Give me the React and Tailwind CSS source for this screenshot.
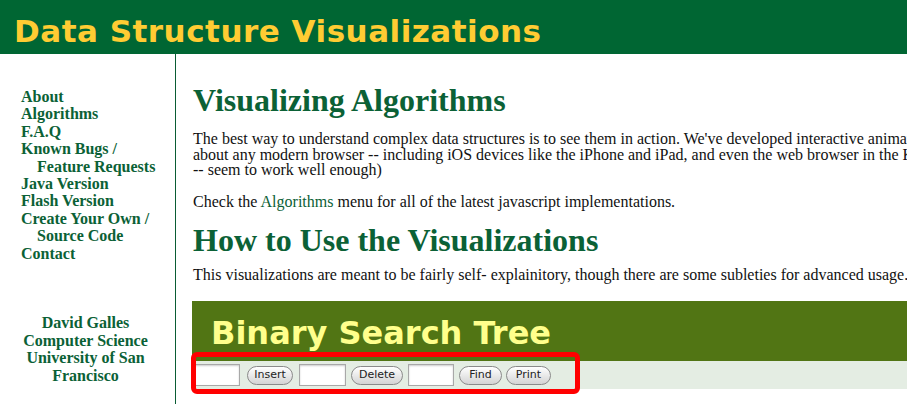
export default function App() {
  const links = [
    { label: "About" },
    { label: "Algorithms" },
    { label: "F.A.Q" },
    { label: "Known Bugs /" },
    { label: "Feature Requests", indent: true },
    { label: "Java Version" },
    { label: "Flash Version" },
    { label: "Create Your Own /" },
    { label: "Source Code", indent: true },
    { label: "Contact" },
  ];

  return (
    <div className="h-screen overflow-hidden bg-white flex flex-col">
      {/* Header */}
      <header className="h-[54px] shrink-0 bg-[#006633] pl-[14px] pt-[8px]">
        <h1 className="font-['DejaVu_Sans',sans-serif] font-bold text-[31px] leading-normal tracking-[0.5px] text-[#ffcc33] whitespace-nowrap">
          Data Structure Visualizations
        </h1>
      </header>

      <div className="flex flex-1 font-['Liberation_Serif',serif]">
        {/* Sidebar */}
        <nav className="w-[176px] shrink-0 border-r border-[#0a5c34] pt-[34px]">
          <ul className="pl-[21px] text-[16px] leading-[17.4px] font-bold text-[#0b6136]">
            {links.map((l) => (
              <li key={l.label} className={l.indent ? "pl-[16px]" : ""}>
                <a href="#" className="whitespace-nowrap">{l.label}</a>
              </li>
            ))}
          </ul>
          <div className="mt-[52px] pl-[6px] pr-[10px] text-center text-[16px] leading-[17.6px] font-bold text-[#0b6136]">
            David Galles
            <br />
            Computer Science
            <br />
            University of San Francisco
          </div>
        </nav>

        {/* Main content */}
        <main className="flex-1 pl-[17px] text-[#111]">
          <h2 className="mt-[28px] text-[32px] leading-[36px] font-bold text-[#0b6136] whitespace-nowrap">
            Visualizing Algorithms
          </h2>
          <div className="mt-[13px] text-[16px] leading-[15.7px] whitespace-nowrap">
            <p>
              The best way to understand complex data structures is to see them in action. We've developed interactive animations for a variety of data structures and algorithms. Our visualization tool is written in javascript using the HTML5 canvas element, and run in just
            </p>
            <p>
              about any modern browser -- including iOS devices like the iPhone and iPad, and even the web browser in the Kindle! (The frame rate is low enough in the Kindle that the visualizations aren't terribly useful, but the tree-based visualizations
            </p>
            <p>-- seem to work well enough)</p>
            <p>&nbsp;</p>
            <p>
              Check the <a href="#" className="text-[#0b6136]">Algorithms</a> menu for all of the latest javascript implementations.
            </p>
          </div>
          <h2 className="mt-[12px] text-[32px] leading-[36px] font-bold text-[#0b6136] whitespace-nowrap">
            How to Use the Visualizations
          </h2>
          <p className="mt-[9px] text-[16px] leading-[15.7px] whitespace-nowrap">
            This visualizations are meant to be fairly self- explainitory, though there are some subleties for advanced usage. For more information, see the help pages.
          </p>

          {/* Screenshot of the BST visualization */}
          <div className="relative mt-[19px] -ml-px w-[1200px]">
            <div className="h-[60px] bg-[#517514] pl-[19px] pt-[8px]">
              <div className="font-['DejaVu_Sans',sans-serif] font-bold text-[32px] leading-normal text-[#ffff8c] whitespace-nowrap">
                Binary Search Tree
              </div>
            </div>
            <div className="h-[28px] bg-[#e4ede3] flex items-center font-['DejaVu_Sans',sans-serif] text-[11px] text-[#222]">
              <input readOnly className="ml-[2px] w-[46px] h-[22px] border border-[#a8a8a8] bg-white shadow-[inset_0_1px_2px_rgba(0,0,0,0.2)]" />
              <button className="ml-[7px] w-[46px] h-[19px] rounded-full border border-[#8a8a8a] bg-linear-to-b from-white to-[#d4d4d4]">Insert</button>
              <input readOnly className="ml-[6px] w-[47px] h-[22px] border border-[#a8a8a8] bg-white shadow-[inset_0_1px_2px_rgba(0,0,0,0.2)]" />
              <button className="ml-[5px] w-[52px] h-[19px] rounded-full border border-[#8a8a8a] bg-linear-to-b from-white to-[#d4d4d4]">Delete</button>
              <input readOnly className="ml-[5px] w-[46px] h-[22px] border border-[#a8a8a8] bg-white shadow-[inset_0_1px_2px_rgba(0,0,0,0.2)]" />
              <button className="ml-[5px] w-[43px] h-[19px] rounded-full border border-[#8a8a8a] bg-linear-to-b from-white to-[#d4d4d4]">Find</button>
              <button className="ml-[4px] w-[45px] h-[19px] rounded-full border border-[#8a8a8a] bg-linear-to-b from-white to-[#d4d4d4]">Print</button>
            </div>
            {/* red highlight frame */}
            <div className="absolute left-[-1px] top-[51px] w-[389px] h-[42px] border-[5px] border-[#ff0000] rounded-[6px]" />
          </div>
        </main>
      </div>
    </div>
  );
}
